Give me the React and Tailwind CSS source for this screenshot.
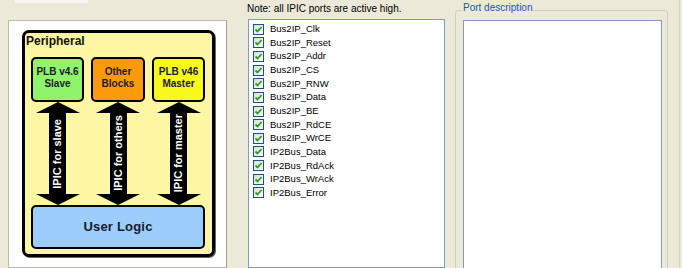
import React from "react";

const ports = [
  "Bus2IP_Clk",
  "Bus2IP_Reset",
  "Bus2IP_Addr",
  "Bus2IP_CS",
  "Bus2IP_RNW",
  "Bus2IP_Data",
  "Bus2IP_BE",
  "Bus2IP_RdCE",
  "Bus2IP_WrCE",
  "IP2Bus_Data",
  "IP2Bus_RdAck",
  "IP2Bus_WrAck",
  "IP2Bus_Error",
];

const blocks = [
  { lines: ["PLB v4.6", "Slave"], bg: "bg-[#8ff36b]", w: "w-[53px]", label: "IPIC for slave" },
  { lines: ["Other", "Blocks"], bg: "bg-[#fb9a09]", w: "w-[54px]", label: "IPIC for others" },
  { lines: ["PLB v46", "Master"], bg: "bg-[#f8f81c]", w: "w-[53px]", label: "IPIC for master" },
];

function Check() {
  return (
    <span className="w-[11px] h-[11px] border border-[#1c5180] bg-gradient-to-br from-[#dcdcd6] to-white flex items-center justify-center shrink-0">
      <svg width="9" height="9" viewBox="0 0 9 9">
        <path d="M1.5 4.5 L3.5 6.5 L7.5 2" fill="none" stroke="#21a121" strokeWidth="1.8" />
      </svg>
    </span>
  );
}

function Arrow({ label }) {
  // block arrow: head up, shaft with text, head down
  return (
    <div className="flex flex-col items-center">
      <svg width="44" height="11" viewBox="0 0 44 11">
        <polygon points="22,0 44,11 0,11" fill="#000" />
      </svg>
      <div className="w-[17px] h-[81px] bg-black flex items-center justify-center">
        <span className="[writing-mode:vertical-rl] rotate-180 text-white font-bold text-[11px] leading-[17px] whitespace-nowrap">
          {label}
        </span>
      </div>
      <svg width="44" height="11" viewBox="0 0 44 11">
        <polygon points="0,0 44,0 22,11" fill="#000" />
      </svg>
    </div>
  );
}

export default function App() {
  return (
    <div
      className="w-[682px] h-[268px] overflow-hidden bg-[#ece9d8] flex"
      style={{ fontFamily: '"Liberation Sans", Arial, sans-serif' }}
    >
      {/* diagram panel */}
      <div className="ml-[8px] w-[219px] flex flex-col shrink-0">
        <div className="ml-[7px] w-[73px] h-[3px] bg-[#f6f5ef]" />
        <div className="mt-[17px] h-[260px] bg-white border border-[#bdbaa8] border-r-[#a3a091] pt-[9px] pl-[13px]">
          <div className="w-[193px] h-[227px] bg-[#fdf6a3] border-[3px] border-black rounded-[7px] shadow-[1px_1px_0_#6b6b50]">
            <div className="pl-[1px] pt-[1px] text-[12px] leading-[14px] font-bold text-[#111]">Peripheral</div>
            <div className="px-[6px] mt-[9px]">
              <div className="flex gap-[7px]">
                {blocks.map((b) => (
                  <div key={b.label} className={`${b.w} flex flex-col items-center`}>
                    <div
                      className={`${b.w} h-[45px] ${b.bg} border-2 border-black rounded-[5px] flex flex-col items-center justify-center pb-[3px] text-[10px] leading-[12px] font-bold text-[#1d1d2d]`}
                    >
                      {b.lines.map((l) => (
                        <div key={l}>{l}</div>
                      ))}
                    </div>
                    <Arrow label={b.label} />
                  </div>
                ))}
              </div>
              <div className="w-[174px] h-[44px] bg-[#9dcdfa] border-2 border-black rounded-[5px] flex items-center justify-center text-[13px] font-bold text-[#141c2c] tracking-[0.2px]">
                User Logic
              </div>
            </div>
          </div>
        </div>
      </div>

      {/* port list */}
      <div className="ml-[20px] w-[198px] flex flex-col shrink-0">
        <div className="h-[20px] pt-[3px] text-[10px] leading-[12px] text-black whitespace-nowrap">
          Note: all IPIC ports are active high.
        </div>
        <div className="ml-[1px] h-[260px] bg-white border border-[#7f9db9] pt-[2px] pl-[4px]">
          {ports.map((p) => (
            <div key={p} className="h-[13.67px] flex items-center gap-[6px]">
              <Check />
              <span className="text-[9.5px] leading-[12px] text-black whitespace-nowrap">{p}</span>
            </div>
          ))}
        </div>
      </div>

      {/* port description group */}
      <div className="ml-[10px] w-[213px] relative shrink-0">
        <div className="mt-[10px] h-[270px] border border-[#d0d0bf] rounded-[3px] pl-[7px] pr-[5px] pt-[9px] flex flex-col">
          <div className="h-[260px] bg-white border border-[#7f9db9]" />
        </div>
        <span className="absolute left-[7px] top-[2px] px-[1px] bg-[#ece9d8] text-[10px] leading-[12px] text-[#2250c8] whitespace-nowrap">
          Port description
        </span>
      </div>
      <div className="ml-[11px] w-px h-full bg-[#d6d3c4]" />
    </div>
  );
}
